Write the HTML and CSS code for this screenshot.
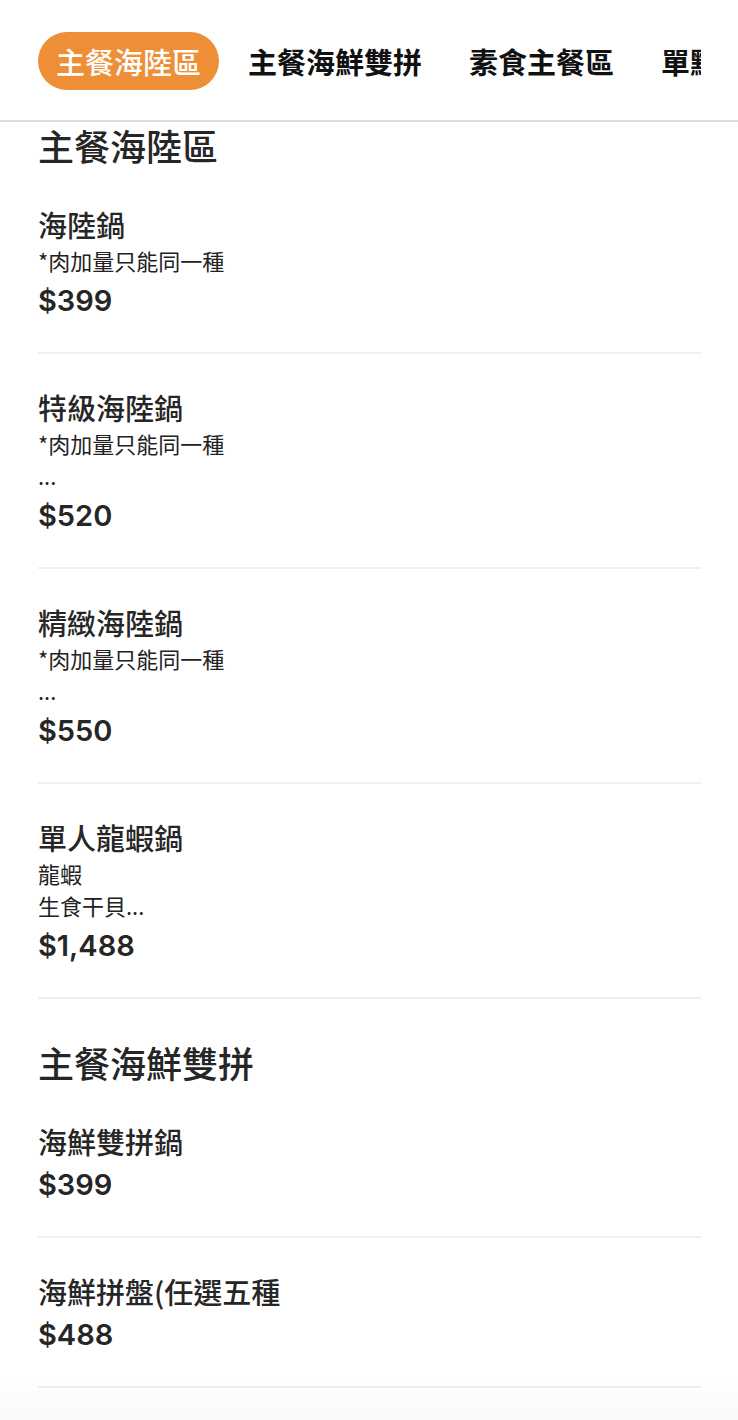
FILE: index.html
```html
<!DOCTYPE html>
<html lang="zh-Hant">
<head>
<meta charset="utf-8">
<title>菜單</title>
<link rel="stylesheet" href="styles.css">
</head>
<body>
<header class="tabbar">
  <nav class="tabs">
    <span class="tab tab-active">主餐海陸區</span>
    <span class="tab">主餐海鮮雙拼</span>
    <span class="tab">素食主餐區</span>
    <span class="tab">單點</span>
  </nav>
</header>
<main class="menu">
  <section class="group">
    <h2 class="group-title">主餐海陸區</h2>
    <div class="item">
      <div class="item-name">海陸鍋</div>
      <div class="item-desc">*肉加量只能同一種</div>
      <div class="item-price">$399</div>
    </div>
    <div class="item">
      <div class="item-name">特級海陸鍋</div>
      <div class="item-desc">*肉加量只能同一種<br>...</div>
      <div class="item-price">$520</div>
    </div>
    <div class="item">
      <div class="item-name">精緻海陸鍋</div>
      <div class="item-desc">*肉加量只能同一種<br>...</div>
      <div class="item-price">$550</div>
    </div>
    <div class="item">
      <div class="item-name">單人龍蝦鍋</div>
      <div class="item-desc">龍蝦<br>生食干貝...</div>
      <div class="item-price">$1,488</div>
    </div>
  </section>
  <section class="group">
    <h2 class="group-title">主餐海鮮雙拼</h2>
    <div class="item">
      <div class="item-name">海鮮雙拼鍋</div>
      <div class="item-price">$399</div>
    </div>
    <div class="item">
      <div class="item-name">海鮮拼盤(任選五種</div>
      <div class="item-price">$488</div>
    </div>
  </section>
</main>
<div class="bottom-fade"></div>
</body>
</html>
```
FILE: styles.css
```css
* { box-sizing: border-box; }

html, body {
  margin: 0;
  padding: 0;
  background: #ffffff;
}

body {
  font-family: "Noto Sans CJK TC", "Noto Sans", sans-serif;
  color: #222222;
}

.tabbar {
  padding: 32px 37px 30px 38px;
  border-bottom: 2px solid #dcdcdc;
  background: #ffffff;
}

.tabs {
  display: flex;
  gap: 11px;
  overflow: hidden;
  white-space: nowrap;
}

.tab {
  flex: none;
  height: 58px;
  line-height: 58px;
  padding: 0 18px;
  border-radius: 29px;
  font-size: 29px;
  font-weight: 700;
  color: #111111;
}

.tab-active {
  background: #ee8e36;
  color: #ffffff;
  font-weight: 500;
}

.menu {
  padding: 0 37px 0 38px;
}

.group + .group {
  margin-top: 40px;
}

.group-title {
  margin: 0;
  font-size: 36px;
  line-height: 46px;
  padding-bottom: 3px;
  font-weight: 500;
  color: #262626;
}

.item {
  display: flex;
  flex-direction: column;
  padding: 33px 0 28px;
  border-bottom: 2px solid #efefef;
}

.item-name {
  font-size: 29px;
  line-height: 40px;
  font-weight: 500;
  color: #262626;
}

.item-desc {
  font-size: 22px;
  line-height: 32.5px;
  font-weight: 400;
  color: #222222;
}

.item-price {
  font-family: "Inter", "Liberation Sans", sans-serif;
  font-size: 29px;
  line-height: 47px;
  font-weight: 600;
  color: #262626;
}

.bottom-fade {
  position: fixed;
  left: 0;
  right: 0;
  bottom: 0;
  height: 40px;
  background: linear-gradient(to bottom, rgba(0, 0, 0, 0), rgba(0, 0, 0, 0.025));
  pointer-events: none;
}
```
